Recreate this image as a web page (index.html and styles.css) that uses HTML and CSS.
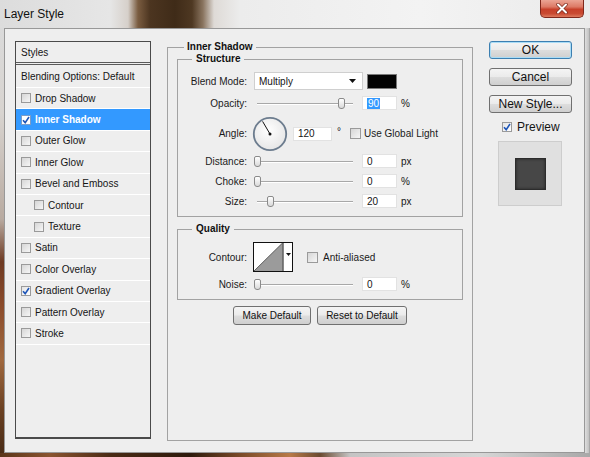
FILE: index.html
```html
<!DOCTYPE html>
<html>
<head>
<meta charset="utf-8">
<title>Layer Style</title>
<link rel="stylesheet" href="styles.css">
</head>
<body>
<div class="window">
  <div class="titlebar">
    <span class="title">Layer Style</span>
    <span class="close">
      <svg width="14" height="11" viewBox="0 0 14 11"><path d="M3 1.5 L11 9.5 M11 1.5 L3 9.5" stroke="#7a2a1c" stroke-width="3.4" stroke-linecap="round"/><path d="M3 1.5 L11 9.5 M11 1.5 L3 9.5" stroke="#ffffff" stroke-width="2" stroke-linecap="round"/></svg>
    </span>
  </div>
  <div class="frame">
    <div class="lframe"></div>
    <div class="client">
      <div class="list">
        <div class="row head">Styles</div>
        <div class="row blend">Blending Options: Default</div>
        <div class="row"><span class="cb"></span>Drop Shadow</div>
        <div class="row sel"><span class="cb on"><svg width="8" height="8" viewBox="0 0 8 8"><path d="M1 4.2 L3.2 6.6 L7 1" fill="none" stroke="#1d55b8" stroke-width="1.6"/></svg></span>Inner Shadow</div>
        <div class="row"><span class="cb"></span>Outer Glow</div>
        <div class="row"><span class="cb"></span>Inner Glow</div>
        <div class="row"><span class="cb"></span>Bevel and Emboss</div>
        <div class="row sub"><span class="cb"></span>Contour</div>
        <div class="row sub"><span class="cb"></span>Texture</div>
        <div class="row"><span class="cb"></span>Satin</div>
        <div class="row"><span class="cb"></span>Color Overlay</div>
        <div class="row"><span class="cb on"><svg width="8" height="8" viewBox="0 0 8 8"><path d="M1 4.2 L3.2 6.6 L7 1" fill="none" stroke="#1d55b8" stroke-width="1.6"/></svg></span>Gradient Overlay</div>
        <div class="row"><span class="cb"></span>Pattern Overlay</div>
        <div class="row"><span class="cb"></span>Stroke</div>
      </div>

      <fieldset class="group main">
        <legend class="lg-main">Inner Shadow</legend>
        <fieldset class="group structure">
          <legend class="lg-sub">Structure</legend>
          <div class="frow r-blend">
            <span class="lbl">Blend Mode:</span>
            <span class="select">Multiply<svg class="arrow" width="7" height="4" viewBox="0 0 7 4"><path d="M0 0 H7 L3.5 4 Z" fill="#111"/></svg></span>
            <span class="swatch"></span>
          </div>
          <div class="frow r-op">
            <span class="lbl">Opacity:</span>
            <span class="slider"><span class="track"></span><span class="thumb" style="left:84px"></span></span>
            <span class="num"><span class="hl">90</span></span>
            <span class="unit">%</span>
          </div>
          <div class="frow r-angle">
            <span class="lbl">Angle:</span>
            <svg class="dial" width="36" height="36" viewBox="0 0 36 36">
              <defs><radialGradient id="dg" cx="45%" cy="40%" r="60%"><stop offset="0" stop-color="#ffffff"/><stop offset="1" stop-color="#e6e6e6"/></radialGradient></defs>
              <circle cx="18" cy="18" r="16.2" fill="url(#dg)" stroke="#6c7c8e" stroke-width="1.8"/>
              <line x1="18" y1="18" x2="10.6" y2="5.4" stroke="#111" stroke-width="1"/>
              <circle cx="18" cy="18" r="1.5" fill="#111"/>
            </svg>
            <span class="num wide">120</span>
            <span class="deg">°</span>
            <span class="cb gl"></span>
            <span class="cbtext">Use Global Light</span>
          </div>
          <div class="frow r-dist">
            <span class="lbl">Distance:</span>
            <span class="slider"><span class="track"></span><span class="thumb" style="left:0px"></span></span>
            <span class="num">0</span>
            <span class="unit">px</span>
          </div>
          <div class="frow r-gap">
            <span class="lbl">Choke:</span>
            <span class="slider"><span class="track"></span><span class="thumb" style="left:0px"></span></span>
            <span class="num">0</span>
            <span class="unit">%</span>
          </div>
          <div class="frow r-gap">
            <span class="lbl">Size:</span>
            <span class="slider"><span class="track"></span><span class="thumb" style="left:13px"></span></span>
            <span class="num">20</span>
            <span class="unit">px</span>
          </div>
        </fieldset>

        <fieldset class="group quality">
          <legend class="lg-sub">Quality</legend>
          <div class="frow r-contour">
            <span class="lbl">Contour:</span>
            <svg class="contour" width="40" height="30" viewBox="0 0 40 30">
              <rect x="0.5" y="0.5" width="39" height="29" fill="#fff" stroke="#111"/>
              <polygon points="1,29 29.5,1 29.5,29" fill="#9b9b9b"/>
              <line x1="1" y1="29" x2="29.5" y2="1" stroke="#444" stroke-width="0.8"/>
              <line x1="30" y1="0" x2="30" y2="30" stroke="#111"/>
              <path d="M33 11 H38 L35.5 14 Z" fill="#111"/>
            </svg>
            <span class="cb aa"></span>
            <span class="cbtext">Anti-aliased</span>
          </div>
          <div class="frow r-noise">
            <span class="lbl">Noise:</span>
            <span class="slider"><span class="track"></span><span class="thumb" style="left:0px"></span></span>
            <span class="num">0</span>
            <span class="unit">%</span>
          </div>
        </fieldset>

        <div class="btnrow">
          <span class="btn bmd">Make Default</span>
          <span class="btn brd">Reset to Default</span>
        </div>
      </fieldset>

      <div class="side">
        <span class="btn sbtn ok">OK</span>
        <span class="btn sbtn">Cancel</span>
        <span class="btn sbtn">New Style...</span>
        <div class="preview-row">
          <span class="cb on pv"><svg width="8" height="8" viewBox="0 0 8 8"><path d="M1 4.2 L3.2 6.6 L7 1" fill="none" stroke="#1d55b8" stroke-width="1.6"/></svg></span>
          <span class="pvtext">Preview</span>
        </div>
        <div class="pvbox"><div class="pvsq"></div></div>
      </div>
    </div>
    <div class="rframe"></div>
  </div>
  <div class="bframe"></div>
</div>
</body>
</html>
```

FILE: styles.css
```css
* { box-sizing: border-box; }
html, body { margin: 0; padding: 0; }
body {
  width: 590px;
  height: 457px;
  overflow: hidden;
  font-family: "Liberation Sans", Arial, sans-serif;
  font-size: 10px;
  color: #151515;
}

.window {
  width: 590px;
  height: 457px;
  display: flex;
  flex-direction: column;
  background: #d4d4d4;
}

/* title bar */
.titlebar {
  height: 28px;
  flex: none;
  display: flex;
  align-items: flex-start;
  background:
    linear-gradient(to right,
      #dcdcdc 0,
      #e6e6e6 110px,
      #d6d0ca 128px,
      #7a5c40 138px,
      #4c3520 150px,
      #3f2b18 175px,
      #4e3822 192px,
      #8a7560 203px,
      #dedad6 214px,
      #ececec 240px,
      #f3f3f3 420px,
      #ebebeb 590px);
}
.title {
  font-size: 12px;
  line-height: 14px;
  padding: 7px 0 0 4px;
  color: #111;
}
.close {
  margin-left: auto;
  margin-right: 6px;
  width: 44px;
  height: 18px;
  border: 1px solid #80281c;
  border-top: none;
  border-radius: 0 0 5px 5px;
  background: linear-gradient(#eba494 0, #dd7a66 40%, #c7402a 55%, #c94a32 80%, #dd7a5e 100%);
  display: flex;
  align-items: center;
  justify-content: center;
}

/* frame */
.frame {
  flex: 1;
  display: flex;
}
.lframe {
  width: 4px;
  flex: none;
  background: linear-gradient(#dadada 0, #d8d4d0 20%, #b8aaa0 45%, #6e3a22 55%, #8a4a2a 65%, #a0683e 78%, #6a4022 90%, #4a2c16 100%);
}
.rframe {
  flex: 1;
  background: linear-gradient(to right, #dedede, #c4c4c4 70%, #9a9a9a);
}
.bframe {
  height: 4px;
  flex: none;
  background: linear-gradient(to right,
    #5a3418 0, #8a5430 50px, #4a2a14 110px, #2e1a0c 190px, #7a4a28 240px,
    #b87a48 290px, #6a4a30 320px, #c4c4c4 350px, #d6d6d6 480px, #a8a8a8 590px);
}

.client {
  width: 581px;
  flex: none;
  border: 1px solid #989898;
  background: #eeeeee;
  display: flex;
  align-items: flex-start;
  padding: 12px 0 0 10px;
}

/* left style list */
.list {
  width: 136px;
  height: 398px;
  flex: none;
  border: 1px solid #4a4a4a;
  border-bottom-width: 2px;
  background: #eeeeee;
}
.row {
  height: 21.4px;
  border-bottom: 1px solid #ffffff;
  display: flex;
  align-items: center;
  padding-left: 5px;
  white-space: nowrap;
}
.row.head {
  height: 23px;
  border-bottom: 3px double #5a5a5a;
}
.row.blend {
  height: 23px;
}
.row.sub { padding-left: 18px; }
.row.sel {
  background: #3399ff;
  color: #ffffff;
  font-weight: bold;
}

.cb {
  width: 10px;
  height: 10px;
  flex: none;
  border: 1px solid #9a9a9a;
  background: linear-gradient(135deg, #d6d6d6, #f6f6f6);
  margin-right: 4px;
  display: flex;
  align-items: center;
  justify-content: center;
}
.cb.on { background: linear-gradient(135deg, #e4e4e4, #ffffff); }
.row.sel .cb { background: #ffffff; border-color: #7a9cc8; }

/* group boxes */
.group {
  margin: 0;
  min-width: 0;
  border: 1px solid #a2a2a2;
}
.group legend {
  font-weight: bold;
  line-height: 12px;
  padding: 0 3px;
  color: #111;
}
.main {
  width: 306px;
  height: 400px;
  flex: none;
  margin-left: 16px;
  padding: 0 9px;
}
.lg-main { margin-left: 7px; }
.lg-sub { margin-left: 14px; padding: 0 4px !important; }

.structure {
  padding: 7px 0 8px 0;
}
.quality {
  margin-top: 6px;
  padding: 7px 0 8px 0;
}

.frow {
  display: flex;
  align-items: center;
  height: 14px;
  white-space: nowrap;
}
.r-blend { height: 18px; }
.r-op { margin-top: 6px; }
.r-angle { height: 35px; margin-top: 6px; }
.r-dist { margin-top: 3px; }
.r-gap { margin-top: 6px; }
.r-contour { height: 30px; }
.r-noise { margin-top: 5px; }

.lbl {
  width: 69px;
  flex: none;
  text-align: right;
  color: #1a1a1a;
}

.select {
  width: 109px;
  height: 18px;
  margin-left: 7px;
  background: #ffffff;
  border: 1px solid #cfcfcf;
  display: flex;
  align-items: center;
  padding-left: 4px;
  position: relative;
}
.select .arrow { margin-left: auto; margin-right: 6px; }
.swatch {
  width: 30px;
  height: 15px;
  margin-left: 4px;
  background: #030303;
  border: 1px solid #7a7a7a;
}

.slider {
  width: 104px;
  height: 14px;
  margin-left: 7px;
  position: relative;
  flex: none;
}
.track {
  position: absolute;
  left: 3px;
  right: 5px;
  top: 7px;
  height: 2px;
  border-top: 1px solid #a8a8a8;
  border-bottom: 1px solid #ffffff;
}
.thumb {
  position: absolute;
  top: 2px;
  width: 7px;
  height: 11px;
  border: 1px solid #8a8a8a;
  border-radius: 2px 2px 3px 3px;
  background: linear-gradient(#ffffff, #d9d9d9);
}

.num {
  width: 35px;
  height: 14px;
  flex: none;
  margin-left: 4px;
  background: #ffffff;
  border: 1px solid #e2e2e2;
  padding-left: 4px;
  display: flex;
  align-items: center;
}
.num.wide { width: 39px; margin-left: 5px; }
.hl {
  background: #3399ff;
  color: #ffffff;
  padding: 0 1px;
  line-height: 11px;
}
.unit { margin-left: 4px; }

.dial { margin-left: 5px; flex: none; }
.deg { margin-left: 5px; align-self: flex-start; margin-top: 10px; font-size: 10px; }
.cb.gl { margin-left: 9px; margin-right: 3px; width: 11px; height: 11px; }
.cbtext { color: #1a1a1a; }

.contour { margin-left: 6px; flex: none; }
.cb.aa { margin-left: 14px; margin-right: 5px; width: 11px; height: 11px; }

.btnrow {
  margin-top: 6px;
  display: flex;
  justify-content: center;
  gap: 6px;
}
.btn {
  height: 19px;
  display: flex;
  align-items: center;
  justify-content: center;
  border: 1px solid #707070;
  border-radius: 3px;
  background: linear-gradient(#f4f4f4 0, #ebebeb 48%, #dddddd 52%, #cfcfcf 100%);
  color: #111;
  white-space: nowrap;
}
.bmd { width: 78px; }
.brd { width: 90px; }

/* right column */
.side {
  width: 83px;
  flex: none;
  margin-left: 16px;
  display: flex;
  flex-direction: column;
  gap: 9px;
}
.sbtn {
  height: 18px;
  font-size: 12px;
}
.ok {
  border-color: #3c7fb1;
  box-shadow: inset 0 0 0 1px #a9dcf6;
}
.preview-row {
  height: 12px;
  margin-top: -1px;
  display: flex;
  align-items: center;
  padding-left: 13px;
  font-size: 12px;
}
.cb.pv { margin-right: 5px; }
.pvbox {
  width: 64px;
  height: 65px;
  margin-left: 9px;
  margin-top: -1px;
  background: #e0e0e0;
  border: 1px solid #cdcdcd;
  display: flex;
  align-items: center;
  justify-content: center;
}
.pvsq {
  width: 31px;
  height: 32px;
  background: #474747;
  border: 1px solid #2c2c2c;
  box-shadow: inset 0 0 3px #222;
}
```
